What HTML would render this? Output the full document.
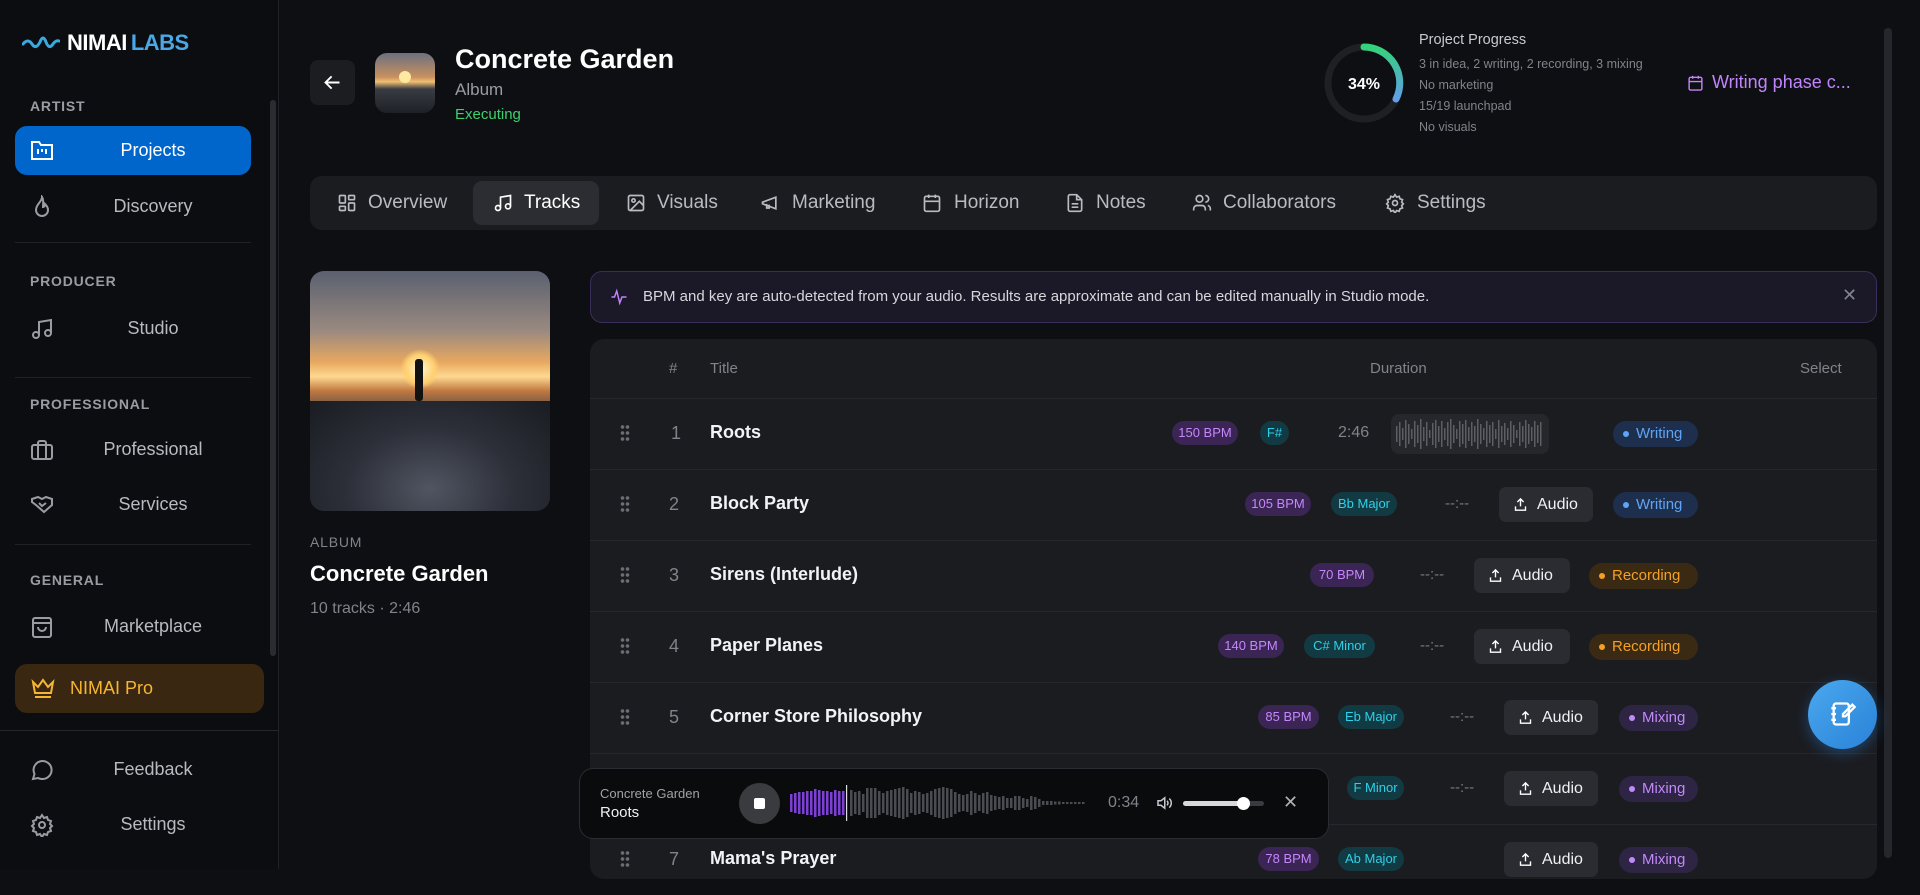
<!DOCTYPE html>
<html><head><meta charset="utf-8"><style>
*{box-sizing:border-box;margin:0;padding:0}
body{width:1920px;height:869px;overflow:hidden;background:#0e0f13;font-family:"Liberation Sans",sans-serif;color:#e8e8ea;position:relative}
.a{position:absolute}
.sb{left:0;top:0;width:279px;height:869px;background:#0c0d10;border-right:1px solid #1f2126}
.lbl{left:30px;font-size:14px;font-weight:700;color:#9a9ca3;letter-spacing:.8px}
.nav{left:15px;width:236px;height:48px;border-radius:12px;font-size:18px;color:#b8bac0;text-align:center;line-height:48px;padding-left:40px}
.nav svg{position:absolute;left:15px;top:13px}
.div{left:15px;width:236px;height:1px;background:#1f2126}
.tab{top:181px;height:44px;line-height:44px;font-size:19px;color:#b9bbc1}
.tab svg{position:absolute;top:12px}
.row{left:590px;width:1287px;height:71px;border-top:1px solid #26282d}
.pill{position:absolute;height:24px;line-height:24px;border-radius:12px;font-size:13px;text-align:center}
.bpm{background:#3a2554;color:#c587fb}
.key{background:#123a43;color:#2fd0e8}
.st{position:absolute;height:26px;line-height:26px;border-radius:13px;font-size:15px;padding-left:23px}
.st:before{content:"";position:absolute;left:10px;top:10px;width:6px;height:6px;border-radius:3px;background:currentColor}
.wr{background:#1d2f4d;color:#5fa4f5}
.rc{background:#3a2a14;color:#f4a024}
.mx{background:#2e2444;color:#c08af8}
.au{position:absolute;height:35px;line-height:35px;border-radius:7px;background:#2b2c31;color:#f1f1f3;font-size:16px;padding-left:38px}
.au svg{position:absolute;left:14px;top:10px}
.dash{position:absolute;font-size:15px;color:#777a82}
.dots{position:absolute;width:10px;height:18px;background:radial-gradient(circle,#6a6d74 1.6px,transparent 2px) 0 0/5px 6px}
.num{position:absolute;font-size:18px;color:#80838b}
.tt{position:absolute;left:710px;font-size:18px;font-weight:700;color:#f3f3f5}
</style></head><body>

<div class="a sb">
 <svg class="a" style="left:22px;top:32px" width="38" height="20" viewBox="0 0 38 20"><path d="M1 12 Q6 6 10 12 T18 10 Q21 2 24 10 T31 12 Q34 8 37 9" fill="none" stroke="#39a9e0" stroke-width="3" stroke-linecap="round"/></svg>
 <div class="a" style="left:67px;top:30px;font-size:22px;font-weight:700;letter-spacing:-.5px;color:#fff">NIMAI<span style="color:#4aa8e6;margin-left:4px">LABS</span></div>
 <div class="a lbl" style="top:98px">ARTIST</div>
 <div class="a nav" style="top:126px;background:#0066cc;color:#fff;height:49px;line-height:49px"><svg width="24" height="22" viewBox="0 0 24 22" fill="none" stroke="#fff" stroke-width="2"><path d="M2 3h7l2 3h11v14H2z"/><path d="M8 10v5M12 10v3M16 10v5"/></svg>Projects</div>
 <div class="a nav" style="top:182px"><svg width="24" height="24" viewBox="0 0 24 24" fill="none" stroke="#9a9ca3" stroke-width="2"><path d="M12 2c0 5-6 7-6 13a6 6 0 0012 0c0-3-2-5-3-6 0 2-1 3-2 3 0-4 1-7-1-10z"/></svg>Discovery</div>
 <div class="a div" style="top:242px"></div>
 <div class="a lbl" style="top:273px">PRODUCER</div>
 <div class="a nav" style="top:304px"><svg width="24" height="24" viewBox="0 0 24 24" fill="none" stroke="#9a9ca3" stroke-width="2"><path d="M9 18V5l12-2v13"/><circle cx="6" cy="18" r="3"/><circle cx="18" cy="16" r="3"/></svg>Studio</div>
 <div class="a div" style="top:377px"></div>
 <div class="a lbl" style="top:396px">PROFESSIONAL</div>
 <div class="a nav" style="top:425px"><svg width="24" height="24" viewBox="0 0 24 24" fill="none" stroke="#9a9ca3" stroke-width="2"><rect x="2" y="7" width="20" height="14" rx="2"/><path d="M16 21V5a2 2 0 00-2-2h-4a2 2 0 00-2 2v16"/></svg>Professional</div>
 <div class="a nav" style="top:480px"><svg width="24" height="24" viewBox="0 0 24 24" fill="none" stroke="#9a9ca3" stroke-width="2"><path d="M2 6l6-2 4 2 4-2 6 2v6l-8 7-8-7-4-3z"/><path d="M9 10l3 3 4-3"/></svg>Services</div>
 <div class="a div" style="top:544px"></div>
 <div class="a lbl" style="top:572px">GENERAL</div>
 <div class="a nav" style="top:602px"><svg width="24" height="24" viewBox="0 0 24 24" fill="none" stroke="#9a9ca3" stroke-width="2"><rect x="3" y="3" width="18" height="19" rx="2"/><path d="M3 8h18M8 12a4 4 0 008 0"/></svg>Marketplace</div>
 <div class="a" style="left:15px;top:664px;width:249px;height:49px;border-radius:12px;background:#3a2712;color:#f6b631;font-size:18px;line-height:49px;padding-left:55px">NIMAI Pro<svg style="position:absolute;left:16px;top:13px" width="24" height="22" viewBox="0 0 24 22" fill="none" stroke="#f6b631" stroke-width="2"><path d="M2 5l5 5 5-7 5 7 5-5-2 11H4z"/><path d="M4 20h16"/></svg></div>
 <div class="a" style="left:0;top:730px;width:279px;height:1px;background:#24262b"></div>
 <div class="a nav" style="top:745px"><svg width="24" height="24" viewBox="0 0 24 24" fill="none" stroke="#9a9ca3" stroke-width="2"><path d="M3 21l1.5-5A9 9 0 1112 21a9 9 0 01-4-1z"/></svg>Feedback</div>
 <div class="a nav" style="top:800px"><svg width="24" height="24" viewBox="0 0 24 24" fill="none" stroke="#9a9ca3" stroke-width="2"><circle cx="12" cy="12" r="3"/><path d="M12 2l2 3 3-1 1 3 3 1-1 3 2 2-2 2 1 3-3 1-1 3-3-1-2 3-2-3-3 1-1-3-3-1 1-3-2-2 2-2-1-3 3-1 1-3 3 1z"/></svg>Settings</div>
 <div class="a" style="left:270px;top:100px;width:6px;height:556px;border-radius:3px;background:#2a2c31"></div>
</div>

<!-- header -->
<div class="a" style="left:310px;top:60px;width:45px;height:45px;border-radius:8px;background:#1c1d21"><svg style="position:absolute;left:12px;top:12px" width="21" height="21" viewBox="0 0 24 24" fill="none" stroke="#fff" stroke-width="2.2"><path d="M20 12H5M11 5l-7 7 7 7"/></svg></div>
<div class="a" style="left:375px;top:53px;width:60px;height:60px;border-radius:12px;overflow:hidden;background:linear-gradient(180deg,#6b7080 0%,#c89060 40%,#f0c070 48%,#3a3c44 60%,#1e2026 100%)"><div class="a" style="left:24px;top:18px;width:12px;height:12px;border-radius:6px;background:#ffe9a0"></div></div>
<div class="a" style="left:455px;top:44px;font-size:27px;font-weight:700;color:#fff">Concrete Garden</div>
<div class="a" style="left:455px;top:80px;font-size:17px;color:#9a9ca3">Album</div>
<div class="a" style="left:455px;top:106px;font-size:15px;color:#3fce6e">Executing</div>

<svg class="a" style="left:1322px;top:41px" width="84" height="84" viewBox="0 0 84 84"><defs><linearGradient id="g" x1="0" y1="0" x2="0" y2="1"><stop offset="0" stop-color="#34d27a"/><stop offset="1" stop-color="#5fa0e8"/></linearGradient></defs><circle cx="42" cy="42" r="36" fill="none" stroke="#1e2024" stroke-width="7"/><path d="M42 6 A36 36 0 0 1 74 58" fill="none" stroke="url(#g)" stroke-width="7" stroke-linecap="round"/><text x="42" y="48" text-anchor="middle" font-family="Liberation Sans" font-weight="700" font-size="16" fill="#fff">34%</text></svg>
<div class="a" style="left:1419px;top:32px;font-size:14.5px;color:#c8cad0">Project Progress</div>
<div class="a" style="left:1419px;top:54px;font-size:12.5px;color:#80838b;line-height:21px">3 in idea, 2 writing, 2 recording, 3 mixing<br>No marketing<br>15/19 launchpad<br>No visuals</div>
<svg class="a" style="left:1687px;top:74px" width="17" height="18" viewBox="0 0 24 24" fill="none" stroke="#c084fc" stroke-width="2"><rect x="3" y="4" width="18" height="18" rx="2"/><path d="M3 10h18M8 2v4M16 2v4"/></svg>
<div class="a" style="left:1712px;top:72px;font-size:18px;color:#c084fc">Writing phase c...</div>
<div class="a" style="left:1884px;top:28px;width:8px;height:830px;border-radius:4px;background:#25272c"></div>

<!-- tabs -->
<div class="a" style="left:310px;top:176px;width:1567px;height:54px;border-radius:12px;background:#1b1c20"></div>
<div class="a" style="left:473px;top:181px;width:126px;height:44px;border-radius:9px;background:#2c2d32"></div>
<div class="a tab" style="left:337px"><svg style="left:0" width="20" height="20" viewBox="0 0 24 24" fill="none" stroke="#b9bbc1" stroke-width="2"><rect x="3" y="3" width="7" height="9" rx="1"/><rect x="14" y="3" width="7" height="5" rx="1"/><rect x="14" y="12" width="7" height="9" rx="1"/><rect x="3" y="16" width="7" height="5" rx="1"/></svg><span style="margin-left:31px">Overview</span></div>
<div class="a tab" style="left:493px;color:#fff"><svg style="left:0" width="20" height="20" viewBox="0 0 24 24" fill="none" stroke="#fff" stroke-width="2"><path d="M9 18V5l12-2v13"/><circle cx="6" cy="18" r="3"/><circle cx="18" cy="16" r="3"/></svg><span style="margin-left:31px">Tracks</span></div>
<div class="a tab" style="left:626px"><svg style="left:0" width="20" height="20" viewBox="0 0 24 24" fill="none" stroke="#b9bbc1" stroke-width="2"><rect x="3" y="3" width="18" height="18" rx="2"/><circle cx="9" cy="9" r="2"/><path d="M21 15l-5-5L5 21"/></svg><span style="margin-left:31px">Visuals</span></div>
<div class="a tab" style="left:760px"><svg style="left:0" width="20" height="20" viewBox="0 0 24 24" fill="none" stroke="#b9bbc1" stroke-width="2"><path d="M3 11l16-6v14L3 13z"/><path d="M8 13v5h3v-4"/></svg><span style="margin-left:32px">Marketing</span></div>
<div class="a tab" style="left:922px"><svg style="left:0" width="20" height="20" viewBox="0 0 24 24" fill="none" stroke="#b9bbc1" stroke-width="2"><rect x="3" y="4" width="18" height="18" rx="2"/><path d="M3 10h18M8 2v4M16 2v4"/></svg><span style="margin-left:32px">Horizon</span></div>
<div class="a tab" style="left:1065px"><svg style="left:0" width="20" height="20" viewBox="0 0 24 24" fill="none" stroke="#b9bbc1" stroke-width="2"><path d="M14 2H6a2 2 0 00-2 2v16a2 2 0 002 2h12a2 2 0 002-2V8z"/><path d="M14 2v6h6M8 13h8M8 17h8"/></svg><span style="margin-left:31px">Notes</span></div>
<div class="a tab" style="left:1191px"><svg style="left:0" width="22" height="20" viewBox="0 0 24 24" fill="none" stroke="#b9bbc1" stroke-width="2"><circle cx="9" cy="7" r="4"/><path d="M2 21v-2a4 4 0 014-4h6a4 4 0 014 4v2M16 3a4 4 0 010 8M22 21v-2a4 4 0 00-3-4"/></svg><span style="margin-left:32px">Collaborators</span></div>
<div class="a tab" style="left:1385px"><svg style="left:0" width="20" height="20" viewBox="0 0 24 24" fill="none" stroke="#b9bbc1" stroke-width="2"><circle cx="12" cy="12" r="3"/><path d="M12 2l2 3 3-1 1 3 3 1-1 3 2 2-2 2 1 3-3 1-1 3-3-1-2 3-2-3-3 1-1-3-3-1 1-3-2-2 2-2-1-3 3-1 1-3 3 1z"/></svg><span style="margin-left:32px">Settings</span></div>

<!-- album card -->
<div class="a" style="left:310px;top:271px;width:240px;height:240px;border-radius:14px;overflow:hidden;background:linear-gradient(180deg,#5a6070 0%,#9a8a80 25%,#e8a860 38%,#ffd890 44%,#c07840 50%,#404350 60%,#2a2c34 80%,#181a20 100%)">
 <div class="a" style="left:90px;top:78px;width:40px;height:40px;border-radius:20px;background:radial-gradient(#fff6d0,#ffd070 50%,rgba(255,180,80,0) 70%)"></div>
 <div class="a" style="left:0;top:130px;width:240px;height:110px;background:radial-gradient(ellipse at 50% 80%,#505562 0%,#2c2f38 50%,#1a1c22 100%)"></div>
 <div class="a" style="left:105px;top:88px;width:8px;height:42px;background:#111;border-radius:3px"></div>
</div>
<div class="a" style="left:310px;top:534px;font-size:14px;color:#80838b;letter-spacing:.8px">ALBUM</div>
<div class="a" style="left:310px;top:561px;font-size:22px;font-weight:700;color:#fff">Concrete Garden</div>
<div class="a" style="left:310px;top:600px;font-size:16px;color:#80838b">10 tracks · 2:46</div>

<!-- banner -->
<div class="a" style="left:590px;top:271px;width:1287px;height:52px;border-radius:12px;background:#1b1828;border:1px solid #3b2d5a"></div>
<svg class="a" style="left:610px;top:288px" width="18" height="18" viewBox="0 0 24 24" fill="none" stroke="#c084fc" stroke-width="2"><path d="M2 12h4l3-8 4 16 3-8h6"/></svg>
<div class="a" style="left:643px;top:288px;font-size:15px;color:#d6d7dc">BPM and key are auto-detected from your audio. Results are approximate and can be edited manually in Studio mode.</div>
<div class="a" style="left:1842px;top:285px;font-size:18px;color:#80838b">✕</div>

<!-- table -->
<div class="a" style="left:590px;top:339px;width:1287px;height:540px;border-radius:14px;background:#1b1c20"></div>
<div class="a" style="left:669px;top:360px;font-size:15px;color:#80838b">#</div>
<div class="a" style="left:710px;top:360px;font-size:15px;color:#80838b">Title</div>
<div class="a" style="left:1370px;top:360px;font-size:15px;color:#80838b">Duration</div>
<div class="a" style="left:1800px;top:360px;font-size:15px;color:#80838b">Select</div>

<div class="a row" style="top:398px"></div>
<div class="a row" style="top:469px"></div>
<div class="a row" style="top:540px"></div>
<div class="a row" style="top:611px"></div>
<div class="a row" style="top:682px"></div>
<div class="a row" style="top:753px"></div>
<div class="a row" style="top:824px"></div>

<!-- row1 -->
<div class="dots" style="left:620px;top:424px"></div>
<div class="num" style="left:671px;top:423px">1</div>
<div class="tt" style="top:422px">Roots</div>
<div class="pill bpm" style="left:1172px;top:421px;width:66px">150 BPM</div>
<div class="pill key" style="left:1260px;top:421px;width:29px">F#</div>
<div class="dash" style="left:1338px;top:424px;color:#80838b;font-size:16px">2:46</div>
<div class="a" style="left:1391px;top:414px;width:158px;height:40px;border-radius:8px;background:#26272b"></div>
<svg class="a" style="left:1395px;top:416px" width="150" height="36" viewBox="0 0 150 36"><g fill="#5c5e64">
<rect x="1" y="10" width="1.5" height="16"/><rect x="4" y="6" width="1.5" height="24"/><rect x="7" y="12" width="1.5" height="12"/><rect x="10" y="4" width="1.5" height="28"/><rect x="13" y="8" width="1.5" height="20"/><rect x="16" y="13" width="1.5" height="10"/><rect x="19" y="5" width="1.5" height="26"/><rect x="22" y="9" width="1.5" height="18"/><rect x="25" y="3" width="1.5" height="30"/><rect x="28" y="11" width="1.5" height="14"/><rect x="31" y="6" width="1.5" height="24"/><rect x="34" y="14" width="1.5" height="8"/><rect x="37" y="7" width="1.5" height="22"/><rect x="40" y="4" width="1.5" height="28"/><rect x="43" y="10" width="1.5" height="16"/><rect x="46" y="5" width="1.5" height="26"/><rect x="49" y="12" width="1.5" height="12"/><rect x="52" y="6" width="1.5" height="24"/><rect x="55" y="3" width="1.5" height="30"/><rect x="58" y="9" width="1.5" height="18"/><rect x="61" y="13" width="1.5" height="10"/><rect x="64" y="5" width="1.5" height="26"/><rect x="67" y="8" width="1.5" height="20"/><rect x="70" y="4" width="1.5" height="28"/><rect x="73" y="11" width="1.5" height="14"/><rect x="76" y="6" width="1.5" height="24"/><rect x="79" y="10" width="1.5" height="16"/><rect x="82" y="3" width="1.5" height="30"/><rect x="85" y="8" width="1.5" height="20"/><rect x="88" y="12" width="1.5" height="12"/><rect x="91" y="5" width="1.5" height="26"/><rect x="94" y="9" width="1.5" height="18"/><rect x="97" y="6" width="1.5" height="24"/><rect x="100" y="13" width="1.5" height="10"/><rect x="103" y="4" width="1.5" height="28"/><rect x="106" y="10" width="1.5" height="16"/><rect x="109" y="7" width="1.5" height="22"/><rect x="112" y="12" width="1.5" height="12"/><rect x="115" y="5" width="1.5" height="26"/><rect x="118" y="9" width="1.5" height="18"/><rect x="121" y="14" width="1.5" height="8"/><rect x="124" y="6" width="1.5" height="24"/><rect x="127" y="10" width="1.5" height="16"/><rect x="130" y="4" width="1.5" height="28"/><rect x="133" y="8" width="1.5" height="20"/><rect x="136" y="11" width="1.5" height="14"/><rect x="139" y="5" width="1.5" height="26"/><rect x="142" y="9" width="1.5" height="18"/><rect x="145" y="6" width="1.5" height="24"/></g></svg>
<div class="st wr" style="left:1613px;top:421px;width:85px">Writing</div>

<!-- row2 -->
<div class="dots" style="left:620px;top:495px"></div>
<div class="num" style="left:669px;top:494px">2</div>
<div class="tt" style="top:493px">Block Party</div>
<div class="pill bpm" style="left:1245px;top:492px;width:66px">105 BPM</div>
<div class="pill key" style="left:1331px;top:492px;width:66px">Bb Major</div>
<div class="dash" style="left:1445px;top:495px">--:--</div>
<div class="au" style="left:1499px;top:487px;width:94px"><svg width="15" height="15" viewBox="0 0 24 24" fill="none" stroke="#fff" stroke-width="2.2"><path d="M12 15V3M7 8l5-5 5 5M4 15v6h16v-6"/></svg>Audio</div>
<div class="st wr" style="left:1613px;top:492px;width:85px">Writing</div>

<!-- row3 -->
<div class="dots" style="left:620px;top:566px"></div>
<div class="num" style="left:669px;top:565px">3</div>
<div class="tt" style="top:564px">Sirens (Interlude)</div>
<div class="pill bpm" style="left:1310px;top:563px;width:64px">70 BPM</div>
<div class="dash" style="left:1420px;top:566px">--:--</div>
<div class="au" style="left:1474px;top:558px;width:96px"><svg width="15" height="15" viewBox="0 0 24 24" fill="none" stroke="#fff" stroke-width="2.2"><path d="M12 15V3M7 8l5-5 5 5M4 15v6h16v-6"/></svg>Audio</div>
<div class="st rc" style="left:1589px;top:563px;width:109px">Recording</div>

<!-- row4 -->
<div class="dots" style="left:620px;top:637px"></div>
<div class="num" style="left:669px;top:636px">4</div>
<div class="tt" style="top:635px">Paper Planes</div>
<div class="pill bpm" style="left:1218px;top:634px;width:66px">140 BPM</div>
<div class="pill key" style="left:1304px;top:634px;width:71px">C# Minor</div>
<div class="dash" style="left:1420px;top:637px">--:--</div>
<div class="au" style="left:1474px;top:629px;width:96px"><svg width="15" height="15" viewBox="0 0 24 24" fill="none" stroke="#fff" stroke-width="2.2"><path d="M12 15V3M7 8l5-5 5 5M4 15v6h16v-6"/></svg>Audio</div>
<div class="st rc" style="left:1589px;top:634px;width:109px">Recording</div>

<!-- row5 -->
<div class="dots" style="left:620px;top:708px"></div>
<div class="num" style="left:669px;top:707px">5</div>
<div class="tt" style="top:706px">Corner Store Philosophy</div>
<div class="pill bpm" style="left:1258px;top:705px;width:61px">85 BPM</div>
<div class="pill key" style="left:1338px;top:705px;width:66px">Eb Major</div>
<div class="dash" style="left:1450px;top:708px">--:--</div>
<div class="au" style="left:1504px;top:700px;width:94px"><svg width="15" height="15" viewBox="0 0 24 24" fill="none" stroke="#fff" stroke-width="2.2"><path d="M12 15V3M7 8l5-5 5 5M4 15v6h16v-6"/></svg>Audio</div>
<div class="st mx" style="left:1619px;top:705px;width:79px">Mixing</div>

<!-- row6 -->
<div class="pill key" style="left:1347px;top:776px;width:57px">F Minor</div>
<div class="dash" style="left:1450px;top:779px">--:--</div>
<div class="au" style="left:1504px;top:771px;width:94px"><svg width="15" height="15" viewBox="0 0 24 24" fill="none" stroke="#fff" stroke-width="2.2"><path d="M12 15V3M7 8l5-5 5 5M4 15v6h16v-6"/></svg>Audio</div>
<div class="st mx" style="left:1619px;top:776px;width:79px">Mixing</div>

<!-- row7 -->
<div class="dots" style="left:620px;top:850px"></div>
<div class="num" style="left:669px;top:849px">7</div>
<div class="tt" style="top:848px">Mama's Prayer</div>
<div class="pill bpm" style="left:1258px;top:847px;width:61px">78 BPM</div>
<div class="pill key" style="left:1338px;top:847px;width:66px">Ab Major</div>
<div class="au" style="left:1504px;top:842px;width:94px"><svg width="15" height="15" viewBox="0 0 24 24" fill="none" stroke="#fff" stroke-width="2.2"><path d="M12 15V3M7 8l5-5 5 5M4 15v6h16v-6"/></svg>Audio</div>
<div class="st mx" style="left:1619px;top:847px;width:79px">Mixing</div>

<!-- fab -->
<div class="a" style="left:1808px;top:680px;width:69px;height:69px;border-radius:35px;background:linear-gradient(135deg,#4aa8ee,#2a82d8);box-shadow:0 4px 14px rgba(40,130,220,.4)"><svg style="position:absolute;left:21px;top:20px" width="28" height="28" viewBox="0 0 24 24" fill="none" stroke="#fff" stroke-width="2"><rect x="4" y="3" width="13" height="18" rx="2"/><path d="M2 7h4M2 12h4M2 17h4M20 4l2 2-8 8h-2v-2z"/></svg></div>

<!-- player -->
<div class="a" style="left:579px;top:768px;width:750px;height:71px;border-radius:14px;background:#0a0b0d;border:1px solid #2a2c31"></div>
<div class="a" style="left:600px;top:786px;font-size:13px;color:#a0a2a8">Concrete Garden</div>
<div class="a" style="left:600px;top:804px;font-size:15px;color:#f1f1f3">Roots</div>
<div class="a" style="left:739px;top:783px;width:41px;height:41px;border-radius:21px;background:#3a3b3f"><div class="a" style="left:15px;top:15px;width:11px;height:11px;border-radius:2px;background:#fff"></div></div>
<svg class="a" style="left:790px;top:785px" width="310" height="36" viewBox="0 0 310 36"><g fill="#7e3fd6">
<rect x="0" y="9" width="2.5" height="18"/><rect x="4" y="8" width="2.5" height="20"/><rect x="8" y="7" width="2.5" height="22"/><rect x="12" y="7" width="2.5" height="22"/><rect x="16" y="6" width="2.5" height="24"/><rect x="20" y="6" width="2.5" height="24"/><rect x="24" y="4" width="2.5" height="28"/><rect x="28" y="5" width="2.5" height="26"/><rect x="32" y="6" width="2.5" height="24"/><rect x="36" y="6" width="2.5" height="24"/><rect x="40" y="7" width="2.5" height="22"/><rect x="44" y="5" width="2.5" height="26"/><rect x="48" y="6" width="2.5" height="24"/><rect x="52" y="6" width="2.5" height="24"/></g>
<rect x="56" y="0" width="1.2" height="36" fill="#ddd"/>
<g fill="#4a4c52"><rect x="60" y="5" width="2.5" height="26"/><rect x="64" y="7" width="2.5" height="22"/><rect x="68" y="6" width="2.5" height="24"/><rect x="72" y="9" width="2.5" height="18"/><rect x="76" y="3" width="2.5" height="30"/><rect x="80" y="3" width="2.5" height="30"/><rect x="84" y="3" width="2.5" height="30"/><rect x="88" y="6" width="2.5" height="24"/><rect x="92" y="8" width="2.5" height="20"/><rect x="96" y="6" width="2.5" height="24"/><rect x="100" y="5" width="2.5" height="26"/><rect x="104" y="4" width="2.5" height="28"/><rect x="108" y="3" width="2.5" height="30"/><rect x="112" y="2" width="2.5" height="32"/><rect x="116" y="4" width="2.5" height="28"/><rect x="120" y="8" width="2.5" height="20"/><rect x="124" y="6" width="2.5" height="24"/><rect x="128" y="7" width="2.5" height="22"/><rect x="132" y="9" width="2.5" height="18"/><rect x="136" y="8" width="2.5" height="20"/><rect x="140" y="6" width="2.5" height="24"/><rect x="144" y="4" width="2.5" height="28"/><rect x="148" y="3" width="2.5" height="30"/><rect x="152" y="2" width="2.5" height="32"/><rect x="156" y="3" width="2.5" height="30"/><rect x="160" y="4" width="2.5" height="28"/><rect x="164" y="7" width="2.5" height="22"/><rect x="168" y="9" width="2.5" height="18"/><rect x="172" y="10" width="2.5" height="16"/><rect x="176" y="9" width="2.5" height="18"/><rect x="180" y="6" width="2.5" height="24"/><rect x="184" y="8" width="2.5" height="20"/><rect x="188" y="10" width="2.5" height="16"/><rect x="192" y="8" width="2.5" height="20"/><rect x="196" y="7" width="2.5" height="22"/><rect x="200" y="10" width="2.5" height="16"/><rect x="204" y="11" width="2.5" height="14"/><rect x="208" y="12" width="2.5" height="12"/><rect x="212" y="11" width="2.5" height="14"/><rect x="216" y="13" width="2.5" height="10"/><rect x="220" y="13" width="2.5" height="10"/><rect x="224" y="11" width="2.5" height="14"/><rect x="228" y="11" width="2.5" height="14"/><rect x="232" y="13" width="2.5" height="10"/><rect x="236" y="14" width="2.5" height="8"/><rect x="240" y="11" width="2.5" height="14"/><rect x="244" y="12" width="2.5" height="12"/><rect x="248" y="14" width="2.5" height="8"/><rect x="252" y="16" width="2.5" height="4"/><rect x="256" y="16" width="2.5" height="4"/><rect x="260" y="16" width="2.5" height="4"/><rect x="264" y="16.5" width="2.5" height="3"/><rect x="268" y="16.5" width="2.5" height="3"/><rect x="272" y="17" width="2.5" height="2"/><rect x="276" y="17" width="2.5" height="2"/><rect x="280" y="17" width="2.5" height="2"/><rect x="284" y="17" width="2.5" height="2"/><rect x="288" y="17" width="2.5" height="2"/><rect x="292" y="17" width="2.5" height="2"/></g></svg>
<div class="a" style="left:1108px;top:794px;font-size:16px;color:#80838b">0:34</div>
<svg class="a" style="left:1154px;top:794px" width="20" height="18" viewBox="0 0 24 24" fill="none" stroke="#c8cad0" stroke-width="2"><path d="M4 9h4l5-4v14l-5-4H4z"/><path d="M16 9a4 4 0 010 6M19 6a8 8 0 010 12"/></svg>
<div class="a" style="left:1183px;top:801px;width:81px;height:5px;border-radius:3px;background:#3a3b40"><div style="width:60px;height:5px;border-radius:3px;background:#d8d8dc"></div></div>
<div class="a" style="left:1237px;top:797px;width:13px;height:13px;border-radius:7px;background:#fff"></div>
<div class="a" style="left:1283px;top:792px;font-size:18px;color:#b0b2b8">✕</div>
</body></html>
